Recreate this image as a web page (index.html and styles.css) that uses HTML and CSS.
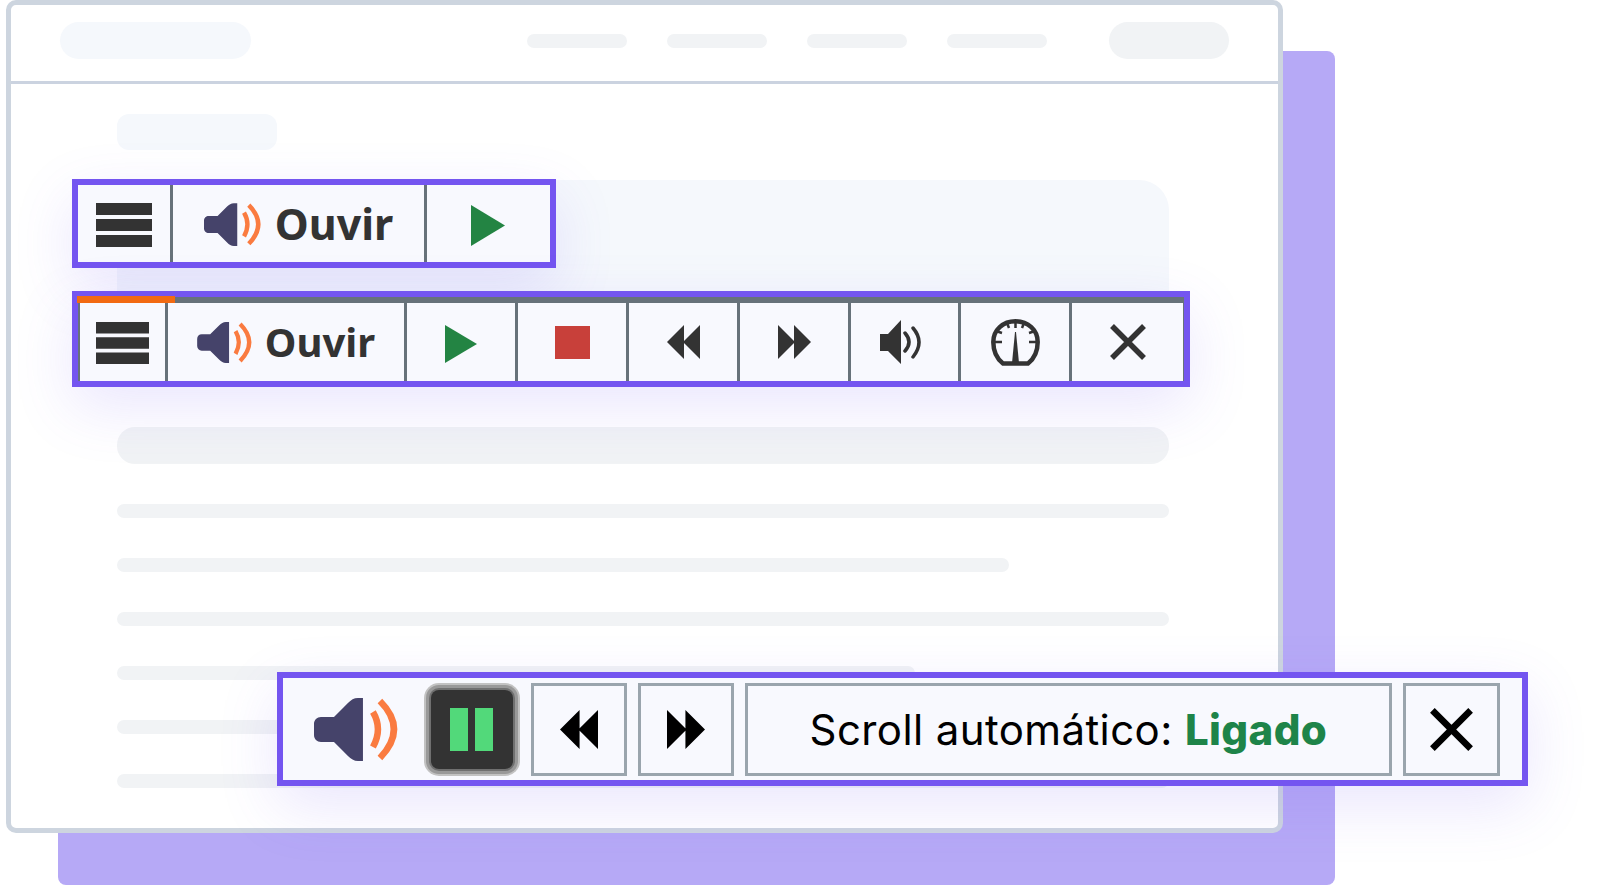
FILE: index.html
```html
<!DOCTYPE html>
<html lang="pt">
<head>
    <meta charset="UTF-8">
    <meta name="viewport" content="width=device-width, initial-scale=1.0">
    <title>Ouvir</title>
    <link rel="stylesheet" href="styles.css">
</head>
<body>

    <svg class="defs" xmlns="http://www.w3.org/2000/svg">
        <symbol id="speaker" viewBox="0 0 84 63">
            <path fill="#45436a" d="M49 0V63H44C40 63 37 61 34 58L20 44H7C3 44 0 41 0 37V26C0 22 3 19 7 19H20L34 5C37 2 40 0 44 0Z"/>
            <path fill="none" stroke="#fa7b40" stroke-width="6.500" d="M59 14Q69 31 59 49M66 3Q94 31 66 60"/>
        </symbol>
        <symbol id="burger" viewBox="0 0 56 44" preserveAspectRatio="none">
            <path fill="#333" d="M0 0H56V12H0ZM0 16H56V28H0ZM0 32H56V44H0Z"/>
        </symbol>
        <symbol id="play" viewBox="0 0 34 41" preserveAspectRatio="none">
            <path fill="#238443" d="M0 0L34 20.500L0 41Z"/>
        </symbol>
        <symbol id="rewind" viewBox="0 0 33 34" preserveAspectRatio="none">
            <path d="M0 17L17 0V34ZM16 17L33 0V34Z"/>
        </symbol>
        <symbol id="forward" viewBox="0 0 33 34" preserveAspectRatio="none">
            <path d="M33 17L16 0V34ZM17 17L0 0V34Z"/>
        </symbol>
        <symbol id="volume" viewBox="0 0 42 44">
            <path fill="#333" d="M0 14H8L21 0V44L8 31H0Z"/>
            <path fill="none" stroke="#333" stroke-width="3.500" stroke-linecap="round" d="M25 13Q33 22 25 31M33 8Q45 22 33 37"/>
        </symbol>
        <symbol id="gauge" viewBox="0 0 49 47">
            <path fill="none" stroke="#333" stroke-width="4.500" d="M12 44.500C5 39 2.300 31 2.300 23C2.300 11 12 2.300 24.500 2.300C37 2.300 46.700 11 46.700 23C46.700 31 44 39 37 44.500Z"/>
            <path fill="#333" d="M24 13H25L28 44H21Z"/>
            <path fill="none" stroke="#333" stroke-width="2.500" d="M24.500 3V9M16 4L18 9M33 4L31 9M5 12L11 14M44 12L38 14M3 23H11M46 23H38"/>
        </symbol>
        <symbol id="close" viewBox="0 0 36 36">
            <path fill="none" stroke="currentColor" stroke-width="5.500" d="M2 2L34 34M34 2L2 34"/>
        </symbol>
    </svg>

    <div class="stage">
        <div class="backdrop"></div>

        <div class="window">
            <header class="topbar">
                <div class="sk sk-logo"></div>
                <nav class="sk-nav">
                    <div class="sk sk-link"></div>
                    <div class="sk sk-link"></div>
                    <div class="sk sk-link"></div>
                    <div class="sk sk-link"></div>
                </nav>
                <div class="sk sk-btn"></div>
            </header>
            <main class="content">
                <div class="sk sk-tag"></div>
                <div class="sk sk-hero"></div>
                <div class="sk sk-title"></div>
                <div class="sk sk-line"></div>
                <div class="sk sk-line short"></div>
                <div class="sk sk-line"></div>
                <div class="sk sk-line mid"></div>
                <div class="sk sk-line"></div>
                <div class="sk sk-line"></div>
            </main>
        </div>

        <!-- leitor fechado -->
        <div class="player player-closed">
            <div class="cell"><svg class="ic-burger"><use href="#burger"/></svg></div>
            <div class="cell listen">
                <svg class="ic-speaker"><use href="#speaker"/></svg>
                <span>Ouvir</span>
            </div>
            <div class="cell"><svg class="ic-play"><use href="#play"/></svg></div>
        </div>

        <!-- leitor aberto -->
        <div class="player player-open">
            <div class="progress"></div>
            <div class="cell"><svg class="ic-burger"><use href="#burger"/></svg></div>
            <div class="cell listen">
                <svg class="ic-speaker"><use href="#speaker"/></svg>
                <span>Ouvir</span>
            </div>
            <div class="cell"><svg class="ic-play"><use href="#play"/></svg></div>
            <div class="cell"><div class="stop"></div></div>
            <div class="cell"><svg class="ic-skip"><use href="#rewind"/></svg></div>
            <div class="cell"><svg class="ic-skip"><use href="#forward"/></svg></div>
            <div class="cell"><svg class="ic-volume"><use href="#volume"/></svg></div>
            <div class="cell"><svg class="ic-gauge"><use href="#gauge"/></svg></div>
            <div class="cell"><svg class="ic-close"><use href="#close"/></svg></div>
        </div>

        <!-- scroll automatico -->
        <div class="player player-scroll">
            <svg class="ic-speaker-big"><use href="#speaker"/></svg>
            <div class="pause-wrap">
                <div class="pause"><i></i><i></i></div>
            </div>
            <div class="box"><svg class="ic-skip-big"><use href="#rewind"/></svg></div>
            <div class="box"><svg class="ic-skip-big"><use href="#forward"/></svg></div>
            <div class="box box-text">Scroll automático:&nbsp;<b>Ligado</b></div>
            <div class="box box-close"><svg class="ic-close-big"><use href="#close"/></svg></div>
        </div>
    </div>

</body>
</html>
```

FILE: styles.css
```css
* {
    box-sizing: border-box;
}
html, body {
    margin: 0;
    background-color: #fff;
}
body {
    font-family: Inter, "Liberation Sans", sans-serif;
    overflow: hidden;
}
.defs {
    display: none;
}
.stage {
    position: relative;
    width: 1600px;
    height: 885px;
    padding-left: 6px;
    overflow: hidden;
}
.backdrop {
    position: absolute;
    left: 58px;
    top: 51px;
    width: 1277px;
    height: 834px;
    border-radius: 8px;
    background-color: #b6a9f6;
}

/* janela */
.window {
    position: relative;
    width: 1277px;
    height: 833px;
    border: 5px solid #cdd5df;
    border-radius: 10px;
    background-color: #fff;
}
.topbar {
    display: flex;
    align-items: center;
    height: 79px;
    padding: 0 49px 5px;
    border-bottom: 3px solid #cbd3e0;
}
.sk {
    background-color: #f1f3f5;
}
.sk-logo {
    width: 191px;
    height: 37px;
    border-radius: 19px;
    background-color: #f5f8fc;
}
.sk-nav {
    display: flex;
    gap: 40px;
    margin-left: auto;
}
.sk-link {
    width: 100px;
    height: 14px;
    border-radius: 7px;
}
.sk-btn {
    width: 120px;
    height: 37px;
    margin-left: 62px;
    border-radius: 19px;
}
.content {
    display: flex;
    flex-direction: column;
    padding: 30px 109px 0 106px;
}
.sk-tag {
    width: 160px;
    height: 36px;
    border-radius: 12px;
    background-color: #f5f8fc;
}
.sk-hero {
    height: 180px;
    margin-top: 30px;
    border-radius: 30px;
    background-color: #f5f8fc;
}
.sk-title {
    height: 37px;
    margin-top: 67px;
    margin-bottom: 40px;
    border-radius: 18px;
}
.sk-line {
    height: 14px;
    margin-bottom: 40px;
    border-radius: 7px;
}
.sk-line.short {
    width: 892px;
}
.sk-line.mid {
    width: 798px;
}

/* leitores */
.player {
    position: absolute;
    border: 6px solid #7455f0;
    background-color: #f8f9fe;
    box-shadow: 0 20px 60px rgba(116, 85, 240, 0.15);
}
.player-closed {
    left: 72px;
    top: 179px;
    width: 484px;
    height: 89px;
    display: grid;
    grid-template-columns: 92px 251px 1fr;
    gap: 3px;
    background-color: #67727a;
}
.player-open {
    left: 72px;
    top: 291px;
    width: 1118px;
    height: 96px;
    display: grid;
    grid-template-columns: 85px 236px 108px 108px 108px 108px 107px 108px 1fr;
    gap: 3px;
    padding: 6px 1px 0 2px;
    background-color: #67727a;
}
.progress {
    position: absolute;
    left: -1px;
    top: -1px;
    width: 98px;
    height: 7px;
    background-color: #f26a12;
}
.cell {
    display: flex;
    align-items: center;
    justify-content: center;
    background-color: #f8f9fe;
    color: #333;
}
.listen span {
    font-family: "Noto Sans", sans-serif;
    font-weight: 700;
    line-height: 1;
}
.player-closed .listen {
    gap: 14px;
    font-size: 43px;
}
.player-open .listen {
    gap: 13px;
    font-size: 40px;
}
.player-closed .ic-burger {
    width: 56px;
    height: 44px;
    margin-top: 2px;
}
.player-open .ic-burger {
    width: 53px;
    height: 42px;
    margin-top: 2px;
}
.player-closed .ic-speaker {
    width: 57px;
    height: 43px;
    margin-top: 2px;
}
.player-open .ic-speaker {
    width: 55px;
    height: 41px;
}
.player-closed .ic-play {
    width: 34px;
    height: 41px;
    margin: 3px 2px 0 0;
}
.player-open .ic-play {
    width: 32px;
    height: 38px;
    margin-top: 3px;
}
.stop {
    width: 35px;
    height: 33px;
    background-color: #c8403a;
}
.ic-skip {
    width: 33px;
    height: 34px;
    fill: #333;
}
.ic-volume {
    width: 42px;
    height: 44px;
    margin-right: 7px;
}
.ic-gauge {
    width: 49px;
    height: 47px;
}
.ic-close {
    width: 36px;
    height: 36px;
}

.player-scroll {
    left: 277px;
    top: 672px;
    width: 1251px;
    height: 114px;
    display: flex;
    align-items: center;
    gap: 11px;
    padding: 0 22px 0 31px;
}
.ic-speaker-big {
    width: 84px;
    height: 63px;
    margin-right: 15px;
}
.pause-wrap {
    padding: 7px;
}
.pause {
    display: flex;
    align-items: center;
    justify-content: center;
    gap: 7px;
    width: 82px;
    height: 79px;
    border-radius: 8px;
    background-color: #333;
    box-shadow: 0 0 0 2px #707070, 0 0 0 5px #999, 0 0 0 7px #c2c2c2;
}
.pause i {
    width: 18px;
    height: 43px;
    background-color: #52d97a;
}
.box {
    display: flex;
    align-items: center;
    justify-content: center;
    width: 96px;
    height: 93px;
    border: 3px solid #9aa5ad;
    color: #000;
}
.box-text {
    width: 648px;
    font-size: 42px;
    letter-spacing: 0.4px;
    white-space: nowrap;
}
.box-text b {
    font-weight: 800;
    color: #1e8449;
}
.box-close {
    width: 97px;
}
.ic-skip-big {
    width: 38px;
    height: 39px;
    fill: #000;
}
.ic-close-big {
    width: 43px;
    height: 43px;
    color: #000;
}
```
